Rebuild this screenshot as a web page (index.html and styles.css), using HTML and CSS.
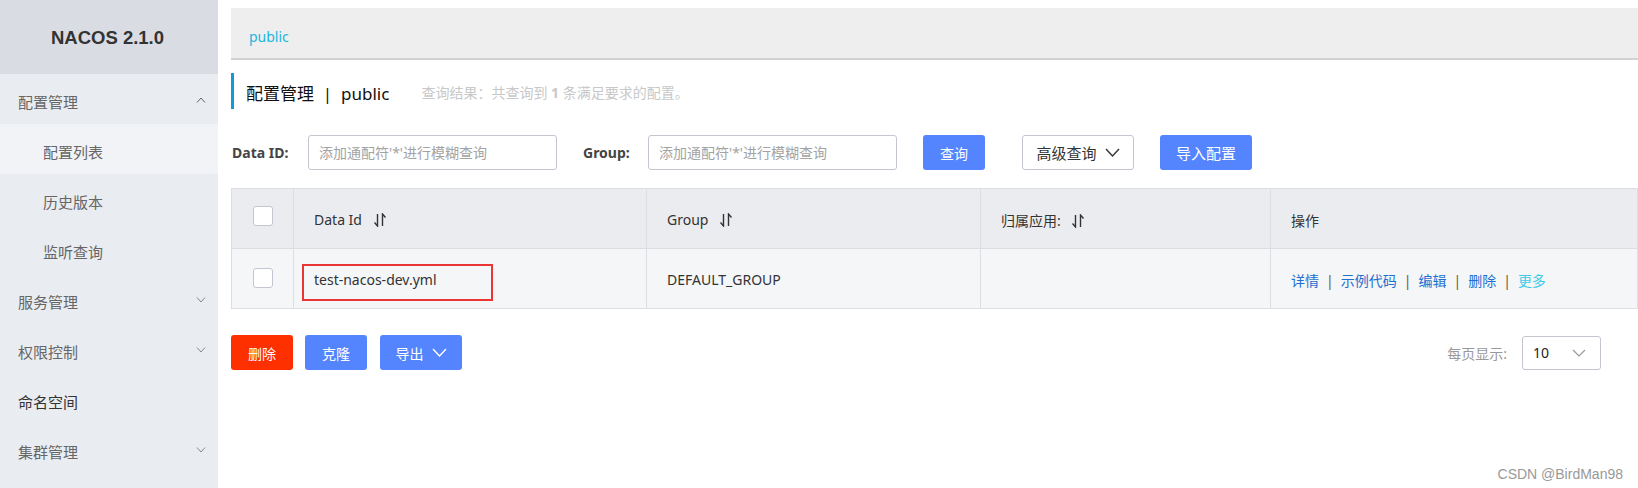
FILE: index.html
```html
<!DOCTYPE html>
<html lang="zh-CN">
<head>
<meta charset="utf-8">
<title>Nacos</title>
<link rel="stylesheet" href="styles.css">
</head>
<body>
<div class="app">
  <aside class="sidebar">
    <div class="logo">NACOS 2.1.0</div>
    <ul class="menu">
      <li class="menu-group"><span>配置管理</span><svg class="chev" width="10" height="6" viewBox="0 0 10 6"><path d="M1 5.5 L5 1 L9 5.5" fill="none" stroke="#666" stroke-width="1"/></svg></li>
      <li class="menu-item active">配置列表</li>
      <li class="menu-item">历史版本</li>
      <li class="menu-item">监听查询</li>
      <li class="menu-group"><span>服务管理</span><svg class="chev" width="10" height="6" viewBox="0 0 10 6"><path d="M1 0.5 L5 5 L9 0.5" fill="none" stroke="#888" stroke-width="1"/></svg></li>
      <li class="menu-group"><span>权限控制</span><svg class="chev" width="10" height="6" viewBox="0 0 10 6"><path d="M1 0.5 L5 5 L9 0.5" fill="none" stroke="#888" stroke-width="1"/></svg></li>
      <li class="menu-group dark"><span>命名空间</span></li>
      <li class="menu-group"><span>集群管理</span><svg class="chev" width="10" height="6" viewBox="0 0 10 6"><path d="M1 0.5 L5 5 L9 0.5" fill="none" stroke="#888" stroke-width="1"/></svg></li>
    </ul>
  </aside>
  <main class="main">
    <div class="ns-bar"><span class="ns-link">public</span></div>
    <div class="page-title">
      <span class="title-text">配置管理&nbsp; |&nbsp; public</span>
      <span class="title-sub">查询结果：共查询到 <b>1</b> 条满足要求的配置。</span>
    </div>
    <div class="search-row">
      <label class="search-label">Data ID:</label>
      <input class="search-input" placeholder="添加通配符'*'进行模糊查询">
      <label class="search-label group-label">Group:</label>
      <input class="search-input" placeholder="添加通配符'*'进行模糊查询">
      <button class="btn btn-primary btn-query">查询</button>
      <button class="btn btn-normal btn-adv">高级查询 <svg width="15" height="9" viewBox="0 0 15 9"><path d="M1 1 L7.5 8 L14 1" fill="none" stroke="#333" stroke-width="1.4"/></svg></button>
      <button class="btn btn-primary btn-import">导入配置</button>
    </div>
    <table class="table">
      <colgroup>
        <col class="c-check"><col class="c-id"><col class="c-group"><col class="c-app"><col>
      </colgroup>
      <thead>
        <tr>
          <th class="check-cell"><span class="checkbox"></span></th>
          <th>Data Id <svg class="sort" width="12" height="14" viewBox="0 0 12 14"><path d="M3.5 1 V13 L0.5 9.5 M8.5 13 V1 L11.5 4.5" fill="none" stroke="#333" stroke-width="1.4"/></svg></th>
          <th>Group <svg class="sort" width="12" height="14" viewBox="0 0 12 14"><path d="M3.5 1 V13 L0.5 9.5 M8.5 13 V1 L11.5 4.5" fill="none" stroke="#333" stroke-width="1.4"/></svg></th>
          <th>归属应用: <svg class="sort" width="12" height="14" viewBox="0 0 12 14"><path d="M3.5 1 V13 L0.5 9.5 M8.5 13 V1 L11.5 4.5" fill="none" stroke="#333" stroke-width="1.4"/></svg></th>
          <th>操作</th>
        </tr>
      </thead>
      <tbody>
        <tr>
          <td class="check-cell"><span class="checkbox"></span></td>
          <td class="id-cell">test-nacos-dev.yml<span class="mark"></span></td>
          <td>DEFAULT_GROUP</td>
          <td></td>
          <td class="ops"><a>详情</a><span class="sep">|</span><a>示例代码</a><span class="sep">|</span><a>编辑</a><span class="sep">|</span><a>删除</a><span class="sep">|</span><a class="more">更多</a></td>
        </tr>
      </tbody>
    </table>
    <div class="footer-row">
      <div class="batch">
        <button class="btn btn-danger btn-sm">删除</button>
        <button class="btn btn-primary btn-sm">克隆</button>
        <button class="btn btn-primary btn-export">导出 <svg width="15" height="9" viewBox="0 0 15 9"><path d="M1 1 L7.5 8 L14 1" fill="none" stroke="#fff" stroke-width="1.4"/></svg></button>
      </div>
      <div class="pager">
        <span class="pager-label">每页显示:</span>
        <div class="select"><span>10</span><svg width="14" height="8" viewBox="0 0 14 8"><path d="M1 1 L7 7 L13 1" fill="none" stroke="#999" stroke-width="1.2"/></svg></div>
      </div>
    </div>
    <div class="watermark">CSDN @BirdMan98</div>
  </main>
</div>
</body>
</html>
```
FILE: styles.css
```css
* { box-sizing: border-box; }
html, body { margin: 0; padding: 0; }
body {
  font-family: "Noto Sans", "Noto Sans CJK SC", sans-serif;
  font-size: 14px;
  color: #333;
  background: #fff;
  width: 1638px;
  height: 488px;
  overflow: hidden;
}
.app { display: flex; height: 488px; }

.sidebar {
  width: 218px;
  flex: none;
  background: #e9ecf0;
  height: 488px;
}
.logo {
  height: 74px;
  background: #d9dde3;
  display: flex;
  align-items: center;
  justify-content: center;
  padding-top: 1px;
  padding-right: 3px;
  font-family: "Liberation Sans", Arial, sans-serif;
  font-weight: bold;
  font-size: 18.5px;
  color: #333;
}
.menu { list-style: none; margin: 0; padding: 0; }
.menu li {
  height: 50px;
  display: flex;
  align-items: center;
  padding-top: 5px;
  font-size: 15px;
  color: #666;
}
.menu-group { padding-left: 18px; padding-right: 12px; justify-content: space-between; }
.menu-group.dark { color: #333; }
.menu-item { padding-left: 43px; }
.menu-item.active { background: #f2f3f7; }
.chev { margin-top: -4px; }

.main {
  flex: 1;
  padding: 8px 0 0 13px;
  position: relative;
  min-width: 0;
}
.ns-bar {
  height: 52px;
  background: #eeeeee;
  border-bottom: 2px solid #d2d2d2;
  display: flex;
  align-items: center;
  padding-left: 18px;
  padding-top: 6px;
}
.ns-link { color: #1fb5dc; font-size: 14px; }

.page-title {
  margin-top: 13px;
  height: 36px;
  border-left: 3px solid #129ad4;
  display: flex;
  align-items: center;
  padding-left: 12px;
  padding-top: 2px;
}
.title-text { font-size: 17px; color: #111; }
.title-sub { margin-left: 32px; font-size: 14px; color: #c8c8c8; }
.title-sub b { font-weight: bold; }

.search-row {
  margin-top: 26px;
  display: flex;
  align-items: center;
  height: 35px;
}
.search-label { font-weight: bold; font-size: 14px; color: #444; margin-left: 1px; width: 61px; }
.group-label { margin-left: 26px; width: 50px; }
.search-input {
  margin-left: 15px;
  width: 249px;
  height: 35px;
  border: 1px solid #c4c6cf;
  border-radius: 3px;
  padding: 0 10px;
  font-family: inherit;
  font-size: 14px;
  color: #333;
  outline: none;
}
.search-input::placeholder { color: #a3a3a3; }
.btn {
  height: 35px;
  border: none;
  border-radius: 3px;
  font-family: inherit;
  font-size: 14px;
  padding: 0;
  display: inline-flex;
  align-items: center;
  justify-content: center;
  gap: 8px;
  cursor: pointer;
}
.btn-primary { background: #5584ff; color: #fff; }
.btn-danger { background: #ff3000; color: #fff; }
.btn-normal { background: #fff; color: #333; border: 1px solid #c4c6cf; font-size: 15px; }
.btn-query { margin-left: 26px; width: 62px; }
.btn-adv { margin-left: 37px; width: 112px; }
.btn-import { margin-left: 26px; width: 92px; font-size: 15px; }

.table {
  margin-top: 18px;
  width: 100%;
  border-collapse: collapse;
  table-layout: fixed;
  font-size: 14px;
}
.c-check { width: 62px; }
.c-id { width: 353px; }
.c-group { width: 334px; }
.c-app { width: 290px; }
.table th, .table td {
  border: 1px solid #dcdee3;
  text-align: left;
  padding: 0 0 0 20px;
  font-weight: normal;
  color: #333;
  vertical-align: middle;
}
.table th { background: #ebecf0; height: 60px; padding-top: 2px; }
.table td { background: #f5f6f8; height: 60px; padding-top: 2px; }
.table .check-cell { padding: 0; text-align: center; }
.table th.check-cell { padding-bottom: 6px; padding-top: 0; }
.table td.check-cell { padding-bottom: 3px; padding-top: 0; }
.checkbox {
  display: inline-block;
  width: 20px;
  height: 20px;
  background: #fff;
  border: 1px solid #c4c6cf;
  border-radius: 3px;
  vertical-align: middle;
}
.sort { vertical-align: -2px; margin-left: 8px; }
.id-cell { position: relative; }
.mark {
  position: absolute;
  left: 8px;
  top: 15px;
  width: 191px;
  height: 37px;
  border: 2px solid #ec3535;
}
.ops a { color: #1f6fd0; text-decoration: none; }
.ops a.more { color: #3fcbe6; }
.ops .sep { color: #6b5a44; margin: 0 7px; }

.footer-row {
  margin-top: 26px;
  display: flex;
  justify-content: space-between;
  align-items: center;
  padding-right: 37px;
}
.batch { display: flex; gap: 12px; }
.btn-sm { width: 62px; }
.btn-export { width: 82px; margin-left: 1px; }
.pager { display: flex; align-items: center; }
.pager-label { color: #999; font-size: 14px; margin-right: 15px; }
.select {
  width: 79px;
  height: 34px;
  border: 1px solid #c4c6cf;
  border-radius: 3px;
  display: flex;
  align-items: center;
  justify-content: space-between;
  padding: 0 14px 0 10px;
  font-size: 14px;
  color: #222;
}
.watermark {
  position: absolute;
  right: 15px;
  bottom: 6px;
  font-family: "Liberation Sans", Arial, sans-serif;
  font-size: 14px;
  color: #999;
}
```
